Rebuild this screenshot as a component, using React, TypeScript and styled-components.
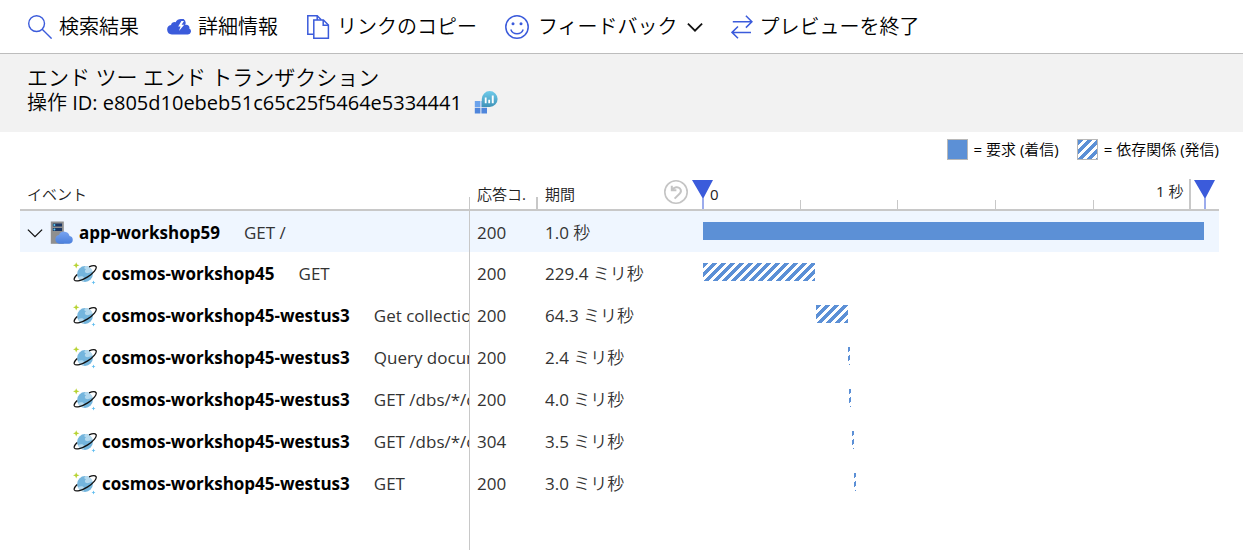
import React from "react";
import styled, { createGlobalStyle, css } from "styled-components";

const accent = "#3b5bdb";
const barBlue = "#5c90d6";
const rule = "#c8c8c8";

const stripes = css`
  background-image: linear-gradient(
    135deg,
    ${barBlue} 0 31%,
    #ffffff 31% 50%,
    ${barBlue} 50% 81%,
    #ffffff 81%
  );
  background-size: 9px 9px;
`;

const GlobalStyle = createGlobalStyle`
  * { box-sizing: border-box; }
  body {
    margin: 0;
    background: #ffffff;
    color: #000000;
    font-family: "Open Sans", "Noto Sans CJK JP DemiLight", "Noto Sans CJK JP", sans-serif;
    font-size: 17px;
    font-weight: 400;
  }
`;

const Page = styled.div`
  display: flex;
  flex-direction: column;
  min-height: 100vh;
`;

const Toolbar = styled.nav`
  display: flex;
  align-items: center;
  gap: 28px;
  height: 54px;
  padding: 0 28px;
  border-bottom: 1px solid #bdbdbd;
  font-weight: 350;
`;

const ToolButton = styled.button<{ $menu?: boolean }>`
  display: flex;
  align-items: center;
  gap: ${(p) => (p.$menu ? 9 : 7)}px;
  padding: 0;
  border: 0;
  background: none;
  color: inherit;
  font: inherit;
  font-size: 20px;
  line-height: 28px;
  white-space: nowrap;
  cursor: pointer;
`;

const Icon = styled.svg`
  display: block;
  flex: none;
`;

const Heading = styled.header`
  padding: 10px 28px 16px 27px;
  background: #f2f2f2;
`;

const Title = styled.h1`
  margin: 0;
  font-size: 21px;
  font-weight: 350;
  line-height: 26px;
`;

const Operation = styled.p`
  display: flex;
  align-items: center;
  gap: 12px;
  margin: 0;
  font-size: 20px;
  line-height: 26px;
`;

const Legend = styled.ul`
  display: flex;
  justify-content: flex-end;
  gap: 18px;
  margin: 0;
  padding: 7px 24px 0;
  list-style: none;
  font-size: 15px;
  line-height: 21px;
`;

const LegendItem = styled.li`
  display: flex;
  align-items: center;
  gap: 6px;
`;

const Swatch = styled.span<{ $striped?: boolean }>`
  width: 21px;
  height: 21px;
  border: 1px solid #b8b8b8;
  background-color: ${barBlue};
  ${(p) => p.$striped && stripes}
`;

const TableArea = styled.main`
  padding: 19px 24px 0 20px;
`;

const Table = styled.table`
  width: 100%;
  table-layout: fixed;
  border-spacing: 0;
`;

const Column = styled.col<{ $width?: number }>`
  width: ${(p) => (p.$width ? `${p.$width}px` : "auto")};
`;

const HeadCell = styled.th<{ $divider?: number }>`
  height: 32px;
  padding: 0 0 0 7px;
  border-bottom: 2px solid ${rule};
  background: linear-gradient(${rule}, ${rule}) right bottom /
    ${(p) => p.$divider ?? 0}px 12px no-repeat;
  color: #222222;
  font-size: 15px;
  font-weight: inherit;
  line-height: 30px;
  text-align: left;
  white-space: nowrap;
`;

const AxisCell = styled(HeadCell)`
  padding: 0 15px 0 0;
`;

const Axis = styled.div`
  display: flex;
  align-items: flex-start;
  gap: 15px;
  height: 30px;
`;

const ResetButton = styled.button`
  flex: none;
  width: 24px;
  height: 26px;
  padding: 1px 0;
  border: 0;
  background: none;
`;

const Scale = styled.div`
  position: relative;
  display: flex;
  align-items: flex-end;
  flex: 1;
  height: 30px;
`;

const Tick = styled.div<{ $major?: boolean }>`
  display: flex;
  justify-content: space-between;
  width: 19.5%;
  height: ${(p) => (p.$major ? 30 : 9)}px;
  padding: 0 6px;
  border-right: ${(p) => (p.$major ? 2 : 1)}px solid ${rule};
  line-height: 24px;
`;

const Origin = styled.span`
  position: absolute;
  left: 7px;
  top: 0;
`;

const TickLabel = styled.span`
  margin-left: auto;
`;

const Handle = styled.svg<{ $end?: boolean }>`
  position: absolute;
  top: 1px;
  left: ${(p) => (p.$end ? "100%" : "0")};
  margin-left: ${(p) => (p.$end ? -10 : -11)}px;
`;

const Row = styled.tr<{ $selected?: boolean }>`
  height: ${(p) => (p.$selected ? 41 : 42)}px;
  background: ${(p) => (p.$selected ? "#eff6ff" : "transparent")};
`;

const Cell = styled.td`
  overflow: hidden;
  padding: 2px 0 0 7px;
  color: #333333;
  line-height: 24px;
  white-space: nowrap;
`;

const EventCell = styled(Cell)<{ $child?: boolean }>`
  padding-left: ${(p) => (p.$child ? 53 : 7)}px;
  border-right: 1px solid ${rule};
`;

const EventLine = styled.div`
  display: flex;
  align-items: center;
`;

const Toggle = styled.button`
  display: flex;
  margin-right: 7px;
  padding: 0;
  border: 0;
  background: none;
`;

const Resource = styled.strong`
  margin: 0 24px 0 5px;
  color: #000000;
  font-weight: 700;
`;

const ChartCell = styled.td`
  padding: 0 15px 2px 39px;
`;

const Bar = styled.div.attrs<{ $start: number; $span: number; $striped?: boolean }>((p) => ({
  style: { marginLeft: `${p.$start}%`, width: `${p.$span}%` },
}))`
  min-width: 2px;
  height: 18px;
  background-color: ${barBlue};
  ${(p) => p.$striped && stripes}
`;

const Filler = styled.div`
  flex: 1;
  width: 450px;
  margin-left: 20px;
  border-right: 1px solid ${rule};
`;

const SearchIcon = () => (
  <Icon width="24" height="24" viewBox="0 0 24 24" fill="none" stroke={accent} strokeWidth="1.4">
    <circle cx="8.6" cy="8.6" r="7.9" />
    <path d="M14.2 14.2 23.6 23.6" />
  </Icon>
);

const CloudIcon = () => (
  <Icon width="24" height="24" viewBox="0 0 24 24">
    <path
      fill={accent}
      d="M4.8 19.5A4.8 4.8 0 0 1 4 10a3.6 3.6 0 0 1 4.6-2.8A6 6 0 0 1 14 4h2.6a5.2 5.2 0 0 1 1.700 5.900 3 3 0 0 1 4 3.600A3.200 3.200 0 0 1 21 19.5Z"
    />
    <path fill="#ffffff" d="M14.400 6 11.200 11.600h2.300l-1.500 4.400 5.200-6.200h-2.600l2.400-3.800Z" />
  </Icon>
);

const CopyIcon = () => (
  <Icon width="24" height="24" viewBox="0 0 24 24" fill="none" stroke={accent} strokeWidth="1.5">
    <path d="M7.5 19.2H1.8V.8h9.4l4 4" />
    <path d="M7.8 5h9.6l5 5v13.2H7.8Z" />
    <path d="M17.2 5v5.2h5.2M11.2.8V5" />
  </Icon>
);

const SmileIcon = () => (
  <Icon width="24" height="24" viewBox="0 0 24 24" fill="none" stroke={accent} strokeWidth="1.5">
    <circle cx="12" cy="12" r="11.2" />
    <path d="M5.8 14.4a6.6 6.6 0 0 0 12.4 0" />
    <circle cx="8" cy="8.8" r="1.5" fill={accent} stroke="none" />
    <circle cx="16" cy="8.8" r="1.5" fill={accent} stroke="none" />
  </Icon>
);

const SwapIcon = () => (
  <Icon width="22" height="24" viewBox="0 0 22 24" fill="none" stroke={accent} strokeWidth="1.500">
    <path d="M1.800 6.700h19M14.900.8l6 5.900-6 5.900M20 17.400H1M7 11.500l-6 5.900 6 5.900" />
  </Icon>
);

const Chevron = ({ stroke = 1.8 }: { stroke?: number }) => (
  <Icon width="16" height="16" viewBox="0 0 16 16" fill="none" stroke="#111111" strokeWidth={stroke}>
    <path d="M.9 4.600 8 11.700 15.100 4.600" />
  </Icon>
);

const InsightsIcon = () => (
  <Icon width="24" height="24" viewBox="0 0 24 24">
    <defs>
      <linearGradient id="bubble" x1="0" y1="0" x2="0" y2="1">
        <stop offset="0" stopColor="#6fcbea" />
        <stop offset="1" stopColor="#3f93b8" />
      </linearGradient>
    </defs>
    <path fill="#6ba3ec" d="M.8 10h5.600v6H.8Z" />
    <path fill="#4f86dc" d="M.8 16.800h5.600v5.600H.8ZM7.400 16.800H13v5.600H7.400Z" />
    <path fill="#6ba3ec" d="M7.400 10H13v6H7.400Z" />
    <path fill="url(#bubble)" d="M7.800 15.900V8A7.900 7.900 0 1 1 15.700 15.900Z" />
    <path fill="#ffffff" d="M10.800 6.400h1.800v5.800h-1.800ZM14.300 8.800h1.800v3.400h-1.800ZM17.800 4.600h1.900v7.600h-1.900Z" />
  </Icon>
);

const ServerIcon = () => (
  <Icon width="24" height="24" viewBox="0 0 24 24">
    <defs>
      <linearGradient id="cloud" x1="0" y1="0" x2="0" y2="1">
        <stop offset="0" stopColor="#78a4f0" />
        <stop offset="1" stopColor="#4a7fdc" />
      </linearGradient>
    </defs>
    <path fill="#8f8f8f" d="M.8.500h13v22.300H.8Z" />
    <path fill="#1c3763" d="M2.800 2.600h9.200v3H2.800ZM2.800 7h9.200v3H2.800Z" />
    <circle cx="4.400" cy="4.100" r="1" fill="#5fd0f5" />
    <circle cx="4.400" cy="8.500" r="1" fill="#5fd0f5" />
    <path
      fill="url(#cloud)"
      d="M9.500 22.800A4.500 4.500 0 0 1 9 13.900a5.600 5.600 0 0 1 10.600 1.200A3.900 3.900 0 0 1 19.300 22.800Z"
    />
  </Icon>
);

const CosmosIcon = () => (
  <Icon width="24" height="24" viewBox="0 0 24 24">
    <circle cx="12" cy="12" r="7.900" fill="#74b5dd" />
    <path
      fill="#b4d9ee"
      d="M12.600 4.100c-2 1.600-1.500 3 .5 3.200-2.200 1.300-1.300 4.200 2 3.800 2-.2 2.300-1.600 4.700-1.400C18.600 6 15.500 4.100 12.600 4.100ZM5 15.500c2-1.700 5-1.600 6 .2 1 2-.2 3.200-1.500 3.700A8 8 0 0 1 5 15.500Z"
    />
    <path
      fill="none"
      stroke="#111111"
      strokeWidth="1.300"
      d="M16 4.900c3.500-1.400 6.200-1.500 7-.2 1.200 2-2.500 6.600-8.300 10.200-5.800 3.700-12 5.200-13.300 3.100-.7-1.200.5-3.300 2.800-5.500"
    />
    <path fill="#b7d332" d="M3.200.2 4.100 2.400 6.500 3.300 4.100 4.200 3.200 6.600 2.300 4.200 0 3.300 2.300 2.400Z" />
    <path fill="#5fbdf0" d="M20.500 18.500 21.100 19.900 22.500 20.500 21.100 21.100 20.500 22.500 19.900 21.100 18.500 20.500 19.900 19.900Z" />
  </Icon>
);

const ResetIcon = () => (
  <Icon width="24" height="24" viewBox="0 0 24 24" fill="none" stroke="#c4c4c4" strokeWidth="1.600">
    <circle cx="12" cy="12" r="11.200" />
    <path strokeWidth="2" d="M7.800 5.800v4.400h4.600M8 10c2.400-3.300 6-3.600 7.800-1.600 1.800 2 1.200 4-.5 5.600L10.600 18.600" />
  </Icon>
);

const RangeHandle = ({ end }: { end?: boolean }) => (
  <Handle $end={end} width="22" height="29" viewBox="0 0 22 29">
    <path fill={accent} d="M0 0h21L11.500 18v11h-1V18Z" />
  </Handle>
);

interface Span {
  resource: string;
  name: string;
  code: string;
  duration: string;
  start: number;
  span: number;
}

const dependencies: Span[] = [
  { resource: "cosmos-workshop45", name: "GET", code: "200", duration: "229.4 ミリ秒", start: 0, span: 22.4 },
  { resource: "cosmos-workshop45-westus3", name: "Get collectio", code: "200", duration: "64.3 ミリ秒", start: 22.6, span: 6.4 },
  { resource: "cosmos-workshop45-westus3", name: "Query docum", code: "200", duration: "2.4 ミリ秒", start: 29, span: 0.3 },
  { resource: "cosmos-workshop45-westus3", name: "GET /dbs/*/c", code: "200", duration: "4.0 ミリ秒", start: 29.2, span: 0.4 },
  { resource: "cosmos-workshop45-westus3", name: "GET /dbs/*/c", code: "304", duration: "3.5 ミリ秒", start: 29.8, span: 0.4 },
  { resource: "cosmos-workshop45-westus3", name: "GET", code: "200", duration: "3.0 ミリ秒", start: 30.2, span: 0.3 },
];

export default function App() {
  return (
    <Page>
      <GlobalStyle />
      <Toolbar>
        <ToolButton><SearchIcon />検索結果</ToolButton>
        <ToolButton><CloudIcon />詳細情報</ToolButton>
        <ToolButton><CopyIcon />リンクのコピー</ToolButton>
        <ToolButton $menu><SmileIcon />フィードバック<Chevron /></ToolButton>
        <ToolButton><SwapIcon />プレビューを終了</ToolButton>
      </Toolbar>
      <Heading>
        <Title>エンド ツー エンド トランザクション</Title>
        <Operation>操作 ID: e805d10ebeb51c65c25f5464e5334441<InsightsIcon /></Operation>
      </Heading>
      <Legend>
        <LegendItem><Swatch />= 要求 (着信)</LegendItem>
        <LegendItem><Swatch $striped />= 依存関係 (発信)</LegendItem>
      </Legend>
      <TableArea>
        <Table>
          <colgroup>
            <Column $width={450} />
            <Column $width={68} />
            <Column $width={126} />
            <Column />
          </colgroup>
          <thead>
            <tr>
              <HeadCell $divider={1}>イベント</HeadCell>
              <HeadCell $divider={2}>応答コ.</HeadCell>
              <HeadCell>期間</HeadCell>
              <AxisCell>
                <Axis>
                  <ResetButton aria-label="リセット"><ResetIcon /></ResetButton>
                  <Scale>
                    <Origin>0</Origin>
                    <Tick />
                    <Tick />
                    <Tick />
                    <Tick />
                    <Tick $major><TickLabel>1 秒</TickLabel></Tick>
                    <RangeHandle />
                    <RangeHandle end />
                  </Scale>
                </Axis>
              </AxisCell>
            </tr>
          </thead>
          <tbody>
            <Row $selected>
              <EventCell>
                <EventLine>
                  <Toggle aria-label="折りたたむ"><Chevron stroke={1.3} /></Toggle>
                  <ServerIcon />
                  <Resource>app-workshop59</Resource>
                  GET /
                </EventLine>
              </EventCell>
              <Cell>200</Cell>
              <Cell>1.0 秒</Cell>
              <ChartCell><Bar $start={0} $span={100} /></ChartCell>
            </Row>
            {dependencies.map((d, i) => (
              <Row key={i}>
                <EventCell $child>
                  <EventLine>
                    <CosmosIcon />
                    <Resource>{d.resource}</Resource>
                    {d.name}
                  </EventLine>
                </EventCell>
                <Cell>{d.code}</Cell>
                <Cell>{d.duration}</Cell>
                <ChartCell><Bar $striped $start={d.start} $span={d.span} /></ChartCell>
              </Row>
            ))}
          </tbody>
        </Table>
      </TableArea>
      <Filler />
    </Page>
  );
}
